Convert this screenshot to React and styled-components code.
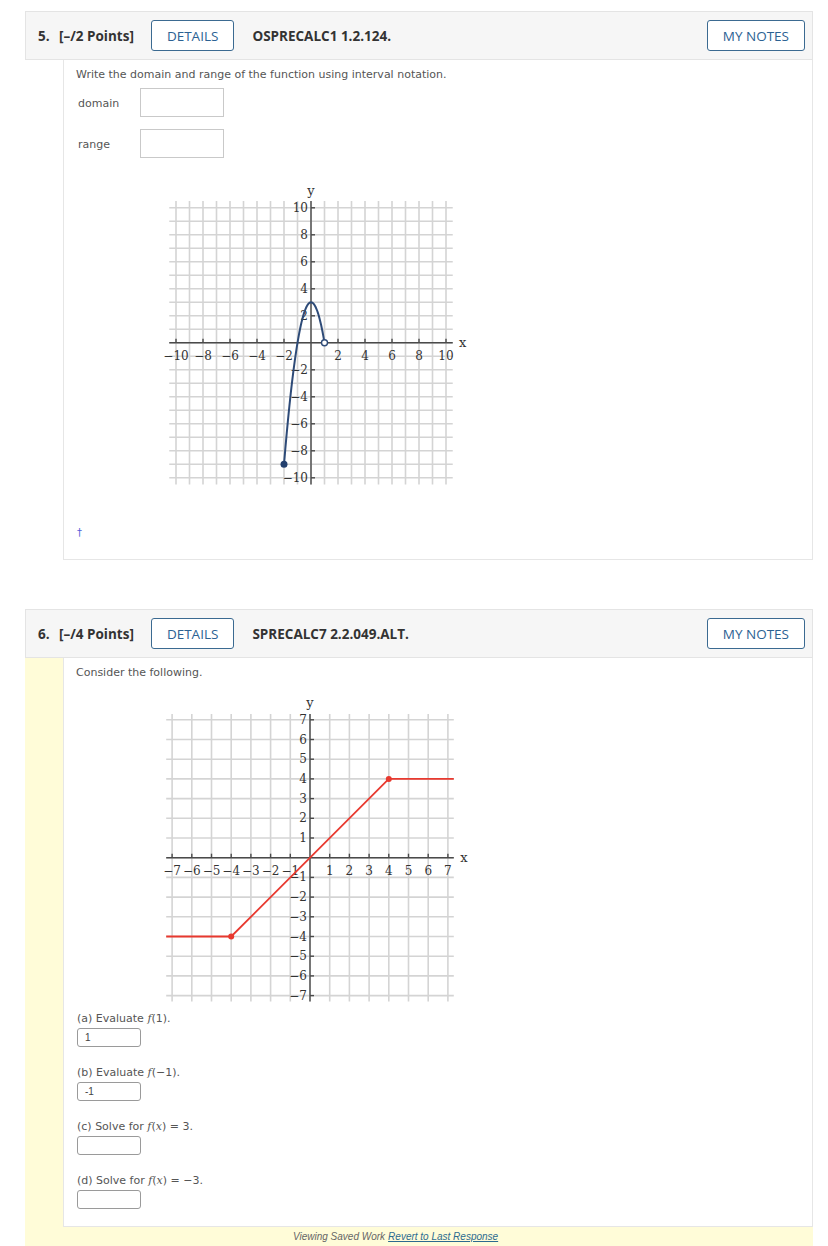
import React from "react";
import styled, { createGlobalStyle } from "styled-components";

const Global = createGlobalStyle`
  html, body { margin: 0; padding: 0; background: #fff; }
  body { font-family: "DejaVu Sans", Verdana, sans-serif; }
`;

const Page = styled.div`
  padding: 11px 15px 0 25px;
  width: 788px;
  display: flex;
  flex-direction: column;
  gap: 49px;
`;

const Question = styled.section`
  display: flex;
  flex-direction: column;
`;

const QHeader = styled.header`
  box-sizing: border-box;
  height: 49px;
  display: flex;
  align-items: center;
  background: #f6f6f6;
  border: 1px solid #e4e4e4;
  padding: 0 7px 0 12px;
  font-family: "Open Sans", sans-serif;
  color: #333;
`;

const QNum = styled.span`
  font-weight: 700;
  font-size: 13.5px;
  width: 21px;
`;

const Points = styled.span`
  font-weight: 700;
  font-size: 13.5px;
  margin-right: 17px;
`;

const OutlineButton = styled.button`
  height: 31px;
  box-sizing: border-box;
  padding: 0 15px;
  border: 1.5px solid #3b6a91;
  border-radius: 3px;
  background: #fff;
  color: #2c6293;
  font-family: "Open Sans", sans-serif;
  font-size: 13.5px;
  font-weight: 500;
  cursor: pointer;
`;

const RefCode = styled.span`
  font-weight: 700;
  font-size: 13.5px;
  margin-left: 18px;
  flex: 1;
`;

const QBody = styled.div`
  display: flex;
  flex-direction: column;
  background: ${(p) => (p.$saved ? "#fffcd8" : "#fff")};
  padding-left: 38px;
`;

const Panel = styled.div`
  background: #fff;
  border: 1px solid #e6e6e6;
  border-top: none;
  padding: ${(p) => p.$pad};
  display: flex;
  flex-direction: column;
  align-items: flex-start;
  color: #555;
  font-size: 11px;
`;

const Prompt = styled.p`
  margin: 0;
  line-height: 15px;
  font-size: 11px;
  color: #555;
`;

const FieldRow = styled.div`
  display: flex;
  align-items: center;
  margin-top: ${(p) => p.$mt}px;
`;

const FieldLabel = styled.label`
  width: 64px;
  padding: 2px 0 0 2px;
  box-sizing: border-box;
  font-size: 11px;
  color: #555;
`;

const BigInput = styled.div`
  width: 84px;
  height: 29px;
  box-sizing: border-box;
  border: 1px solid #c9c9c9;
  background: #fff;
`;

const GraphSvg = styled.svg`
  display: block;
  flex-shrink: 0;
  margin-left: 74px;
  margin-top: ${(p) => p.$mt}px;
`;

const Dagger = styled.span`
  margin-top: 32px;
  margin-left: 1px;
  color: #5560d8;
  font-size: 10px;
  line-height: 12px;
`;

const Part = styled.div`
  display: flex;
  flex-direction: column;
  align-items: flex-start;
  margin-top: ${(p) => p.$mt}px;
`;

const PartLabel = styled.div`
  font-size: 11px;
  line-height: 15px;
  color: #555;
  padding-left: 1px;
  i { font-family: "DejaVu Serif", serif; font-style: italic; }
`;

const SmallInput = styled.div`
  margin-top: 2px;
  margin-left: 1px;
  width: 64px;
  height: 19px;
  box-sizing: border-box;
  border: 1px solid #9a9a9a;
  border-radius: 3px;
  background: #fff;
  font-family: "Liberation Sans", Arial, sans-serif;
  font-size: 10px;
  color: #444;
  padding: 3px 0 0 7px;
`;

const Footer = styled.div`
  height: 19px;
  display: flex;
  align-items: center;
  padding-left: 230px;
  font-family: "Liberation Sans", Arial, sans-serif;
  font-style: italic;
  font-size: 10px;
  color: #666;
  gap: 3px;
`;

const FooterLink = styled.a`
  color: #2c6b8f;
  text-decoration: underline;
`;

function Graph({ ox, oy, unit, ext, step, width, height, mt, children }) {
  const px = (x) => ox + x * unit;
  const py = (y) => oy - y * unit;
  const n = Math.floor(ext);
  const lines = [];
  for (let i = -n; i <= n; i++) {
    lines.push(
      <line key={"v" + i} x1={px(i)} x2={px(i)} y1={py(ext)} y2={py(-ext)} />
    );
    lines.push(
      <line key={"h" + i} x1={px(-ext)} x2={px(ext)} y1={py(i)} y2={py(i)} />
    );
  }
  const labels = [];
  const ticks = [];
  for (let i = -n; i <= n; i++) {
    if (i === 0 || i % step !== 0) continue;
    const t = i < 0 ? "\u2212" + Math.abs(i) : String(i);
    labels.push(
      <text key={"xl" + i} x={px(i)} y={oy + 13} textAnchor="middle" dominantBaseline="central">
        {t}
      </text>
    );
    labels.push(
      <text key={"yl" + i} x={ox - 3} y={py(i)} textAnchor="end" dominantBaseline="central">
        {t}
      </text>
    );
    ticks.push(<line key={"tx" + i} x1={px(i)} x2={px(i)} y1={oy - 4} y2={oy} />);
    ticks.push(<line key={"ty" + i} x1={ox} x2={ox + 4} y1={py(i)} y2={py(i)} />);
  }
  return (
    <GraphSvg width={width} height={height} $mt={mt} viewBox={`0 0 ${width} ${height}`}>
      <g stroke="#d4d4d4" strokeWidth="1.6">{lines}</g>
      <g stroke="#4a4a4a" strokeWidth="1.4">
        <line x1={px(-ext)} x2={px(ext)} y1={oy} y2={oy} />
        <line x1={ox} x2={ox} y1={py(ext)} y2={py(-ext)} />
        {ticks}
      </g>
      <g fontFamily="'DejaVu Serif', serif" fontSize="12" fill="#333">
        {labels}
      </g>
      <g fontFamily="'DejaVu Serif', serif" fontSize="13" fill="#333">
        <text x={px(ext) + 10} y={oy} textAnchor="middle" dominantBaseline="central">x</text>
        <text x={ox} y={py(ext) - 11} textAnchor="middle" dominantBaseline="central">y</text>
      </g>
      {children(px, py)}
    </GraphSvg>
  );
}

function parabolaPath(px, py) {
  const pts = [];
  for (let x = -2; x <= 1.0001; x += 0.05) {
    pts.push(`${px(x).toFixed(2)},${py(3 - 3 * x * x).toFixed(2)}`);
  }
  return "M" + pts.join(" L");
}

export default function App() {
  return (
    <>
      <Global />
      <Page>
        <Question>
          <QHeader>
            <QNum>5.</QNum>
            <Points>[–/2 Points]</Points>
            <OutlineButton>DETAILS</OutlineButton>
            <RefCode>OSPRECALC1 1.2.124.</RefCode>
            <OutlineButton>MY NOTES</OutlineButton>
          </QHeader>
          <QBody>
            <Panel $pad="7px 12px 20px 12px">
              <Prompt>Write the domain and range of the function using interval notation.</Prompt>
              <FieldRow $mt={6}>
                <FieldLabel>domain</FieldLabel>
                <BigInput />
              </FieldRow>
              <FieldRow $mt={12}>
                <FieldLabel>range</FieldLabel>
                <BigInput />
              </FieldRow>
              <Graph ox={161} oy={167.8} unit={13.5} ext={10.5} step={2} width={320} height={320} mt={17}>
                {(px, py) => (
                  <g>
                    <path d={parabolaPath(px, py)} fill="none" stroke="#2e4b78" strokeWidth="2" />
                    <circle cx={px(-2)} cy={py(-9)} r="3.5" fill="#23406e" />
                    <circle cx={px(1)} cy={py(0)} r="3" fill="#fff" stroke="#2e4b78" strokeWidth="1.4" />
                  </g>
                )}
              </Graph>
              <Dagger>†</Dagger>
            </Panel>
          </QBody>
        </Question>

        <Question>
          <QHeader>
            <QNum>6.</QNum>
            <Points>[–/4 Points]</Points>
            <OutlineButton>DETAILS</OutlineButton>
            <RefCode>SPRECALC7 2.2.049.ALT.</RefCode>
            <OutlineButton>MY NOTES</OutlineButton>
          </QHeader>
          <QBody $saved>
            <Panel $pad="7px 12px 17px 12px">
              <Prompt>Consider the following.</Prompt>
              <Graph ox={160} oy={168.7} unit={19.7} ext={7.3} step={1} width={320} height={319} mt={9}>
                {(px, py) => (
                  <g>
                    <polyline
                      points={`${px(-7.3)},${py(-4)} ${px(-4)},${py(-4)} ${px(4)},${py(4)} ${px(7.3)},${py(4)}`}
                      fill="none"
                      stroke="#e8392f"
                      strokeWidth="1.8"
                    />
                    <circle cx={px(-4)} cy={py(-4)} r="3" fill="#e8392f" />
                    <circle cx={px(4)} cy={py(4)} r="3" fill="#e8392f" />
                  </g>
                )}
              </Graph>
              <Part $mt={3}>
                <PartLabel>(a) Evaluate <i>f</i>(1).</PartLabel>
                <SmallInput>1</SmallInput>
              </Part>
              <Part $mt={18}>
                <PartLabel>(b) Evaluate <i>f</i>(−1).</PartLabel>
                <SmallInput>-1</SmallInput>
              </Part>
              <Part $mt={18}>
                <PartLabel>(c) Solve for <i>f</i>(<i>x</i>) = 3.</PartLabel>
                <SmallInput />
              </Part>
              <Part $mt={18}>
                <PartLabel>(d) Solve for <i>f</i>(<i>x</i>) = −3.</PartLabel>
                <SmallInput />
              </Part>
            </Panel>
            <Footer>
              <span>Viewing Saved Work</span>
              <FooterLink href="#">Revert to Last Response</FooterLink>
            </Footer>
          </QBody>
        </Question>
      </Page>
    </>
  );
}
